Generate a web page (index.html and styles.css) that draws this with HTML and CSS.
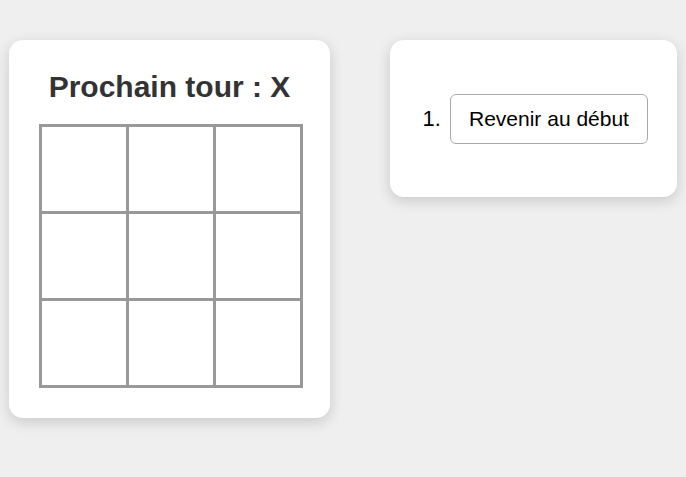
FILE: index.html
```html
<!DOCTYPE html>
<html lang="fr">
<head>
<meta charset="utf-8">
<title>Morpion</title>
<link rel="stylesheet" href="styles.css">
</head>
<body>
<div class="game">
  <div class="card board-card">
    <h1 class="status">Prochain tour : X</h1>
    <div class="board">
      <button class="square"></button><button class="square"></button><button class="square"></button>
      <button class="square"></button><button class="square"></button><button class="square"></button>
      <button class="square"></button><button class="square"></button><button class="square"></button>
    </div>
  </div>
  <div class="card info-card">
    <ol class="moves">
      <li><button class="move">Revenir au début</button></li>
    </ol>
  </div>
</div>
</body>
</html>
```
FILE: styles.css
```css
html, body {
  margin: 0;
  padding: 0;
  background: #efefef;
  font-family: "Liberation Sans", Arial, sans-serif;
}
.game {
  display: flex;
  align-items: flex-start;
  gap: 60px;
  padding: 40px 9px;
}
.card {
  background: #fff;
  border-radius: 14px;
  box-shadow: 0 4px 14px rgba(0, 0, 0, 0.16);
}
.board-card {
  width: 321px;
  box-sizing: border-box;
  padding: 30px;
}
.status {
  margin: 0 0 20px;
  text-align: center;
  font-size: 30px;
  line-height: 34px;
  font-weight: bold;
  color: #333;
}
.board {
  display: grid;
  grid-template-columns: repeat(3, 84px);
  grid-auto-rows: 84px;
  gap: 3px;
  padding: 3px;
  background: #999;
  width: max-content;
}
.square {
  border: 0;
  margin: 0;
  padding: 0;
  background: #fff;
}
.info-card {
  width: 287px;
  height: 157px;
  box-sizing: border-box;
  padding: 54px 20px 0 30px;
}
.moves {
  margin: 0;
  padding-left: 27px;
  font-size: 22px;
  color: #000;
}
.move {
  font-family: "Liberation Sans", Arial, sans-serif;
  font-size: 21px;
  line-height: 24px;
  padding: 12px 18px;
  white-space: nowrap;
  background: #fff;
  color: #000;
  border: 1px solid #aaa;
  border-radius: 6px;
  margin-left: 3px;
}
```
